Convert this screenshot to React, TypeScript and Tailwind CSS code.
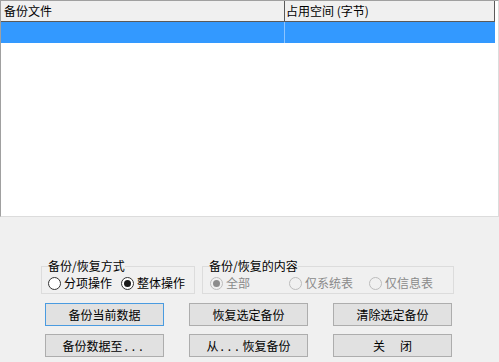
import React from "react";

const font = { fontFamily: '"Noto Sans CJK SC", "Noto Sans", sans-serif' };

function Radio({ checked, disabled, label, w }: { checked?: boolean; disabled?: boolean; label: string; w: string }) {
  return (
    <div className={`flex items-center ${w}`}>
      <span
        className={`w-[13px] h-[13px] rounded-full border flex items-center justify-center shrink-0 ${
          disabled ? "border-[#bcbcbc] bg-[#f0f0f0]" : "border-[#333333] bg-white"
        }`}
      >
        {checked && (
          <span className={`w-[7px] h-[7px] rounded-full ${disabled ? "bg-[#8c8c8c]" : "bg-[#1a1a1a]"}`} />
        )}
      </span>
      <span className={`ml-[3px] text-[12px] leading-[14px] ${disabled ? "text-[#8a8a8a]" : "text-black"}`}>{label}</span>
    </div>
  );
}

function Btn({ children, def }: { children: React.ReactNode; def?: boolean }) {
  return (
    <div
      className={`w-[119px] h-[23px] flex items-center justify-center bg-[#e1e1e1] border text-[12px] text-black ${
        def ? "border-[#4a9be0]" : "border-[#adadad]"
      }`}
    >
      {children}
    </div>
  );
}

export default function App() {
  return (
    <div className="w-[499px] h-[362px] bg-[#f0f0f0] overflow-hidden flex flex-col" style={font}>
      {/* list */}
      <div className="h-[217px] bg-white border-t border-l border-[#a0a0a0] border-r border-b border-r-[#dcdcdc] border-b-[#dcdcdc] flex flex-col">
        <div className="flex h-[21px] w-[494px] bg-[#f0f0f0] border-b border-[#5a5a5a] text-[12px] leading-[20px] text-black">
          <div className="w-[284px] border-r border-[#5a5a5a] pl-[3px]">备份文件</div>
          <div className="flex-1 border-r border-[#5a5a5a] pl-[1px]">占用空间 (字节)</div>
        </div>
        <div className="flex h-[21px] w-[494px] bg-[#3399ff]">
          <div className="w-[284px] border-r border-[#8cc4ff]" />
          <div className="flex-1" />
        </div>
      </div>

      {/* groups */}
      <div className="flex mt-[42px] pl-[41px] gap-[7px]">
        <fieldset className="w-[154px] h-[35px] border border-[#dcdcdc] p-0 m-0">
          <legend className="ml-[6px] px-0 text-[12px] leading-[14px] text-black">备份/恢复方式</legend>
          <div className="flex mt-[3px] pl-[6px]">
            <Radio label="分项操作" w="w-[73px]" />
            <Radio label="整体操作" checked w="w-[73px]" />
          </div>
        </fieldset>
        <fieldset className="w-[252px] h-[35px] border border-[#dcdcdc] p-0 m-0">
          <legend className="ml-[6px] px-0 text-[12px] leading-[14px] text-black">备份/恢复的内容</legend>
          <div className="flex mt-[3px] pl-[7px]">
            <Radio label="全部" checked disabled w="w-[79px]" />
            <Radio label="仅系统表" disabled w="w-[80px]" />
            <Radio label="仅信息表" disabled w="w-[80px]" />
          </div>
        </fieldset>
      </div>

      {/* buttons */}
      <div className="flex flex-col gap-[8px] mt-[9px] pl-[45px]">
        <div className="flex gap-[25px]">
          <Btn def>备份当前数据</Btn>
          <Btn>恢复选定备份</Btn>
          <Btn>清除选定备份</Btn>
        </div>
        <div className="flex gap-[25px]">
          <Btn>
            备份数据至<span className="tracking-[4px] ml-[2px]">...</span>
          </Btn>
          <Btn>
            从<span className="tracking-[4px] ml-[2px]">...</span>恢复备份
          </Btn>
          <Btn>
            关<span className="ml-[15px]">闭</span>
          </Btn>
        </div>
      </div>
    </div>
  );
}
